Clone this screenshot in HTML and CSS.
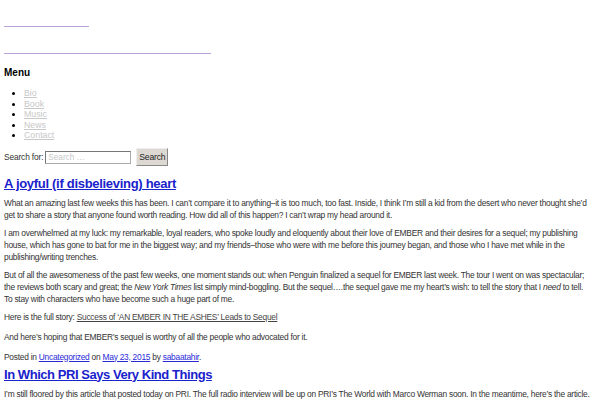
FILE: index.html
```html
<!DOCTYPE html>
<html>
<head>
<meta charset="utf-8">
<link rel="stylesheet" href="styles.css">
</head>
<body>
<header class="site-header">
  <h1 class="site-title"><a href="#" class="ghost ghost-title" aria-label="Home"></a></h1>
  <h2 class="site-desc"><a href="#" class="ghost ghost-desc" aria-label="Tagline"></a></h2>
</header>
<nav class="menu">
  <h3 class="menu-title">Menu</h3>
  <ul class="menu-list">
    <li><a href="#">Bio</a></li>
    <li><a href="#">Book</a></li>
    <li><a href="#">Music</a></li>
    <li><a href="#">News</a></li>
    <li><a href="#">Contact</a></li>
  </ul>
</nav>
<form class="search">
  <label class="search-label">Search for:</label>
  <input class="search-input" type="text" placeholder="Search …">
  <button class="search-btn" type="button">Search</button>
</form>
<article class="post">
  <h2 class="post-title"><a href="#">A joyful (if disbelieving) heart</a></h2>
  <p>What an amazing last few weeks this has been. I can’t compare it to anything–it is too much, too fast. Inside, I think I’m still a kid from the desert who never thought she’d get to share a story that anyone found worth reading. How did all of this happen? I can’t wrap my head around it.</p>
  <p>I am overwhelmed at my luck: my remarkable, loyal readers, who spoke loudly and eloquently about their love of EMBER and their desires for a sequel; my publishing house, which has gone to bat for me in the biggest way; and my friends–those who were with me before this journey began, and those who I have met while in the publishing/writing trenches.</p>
  <p>But of all the awesomeness of the past few weeks, one moment stands out: when Penguin finalized a sequel for EMBER last week. The tour I went on was spectacular; the reviews both scary and great; the <em>New York Times</em> list simply mind-boggling. But the sequel….the sequel gave me my heart’s wish: to tell the story that I <em>need</em> to tell. To stay with characters who have become such a huge part of me.</p>
  <p class="story">Here is the full story:  <a href="#" class="story-link">Success of ‘AN EMBER IN THE ASHES’ Leads to Sequel</a></p>
  <p>And here’s hoping that EMBER’s sequel is worthy of all the people who advocated for it.</p>
  <p class="meta">Posted in <a href="#">Uncategorized</a> on <a href="#">May 23, 2015</a> by <a href="#">sabaatahir</a>.</p>
</article>
<article class="post">
  <h2 class="post-title post-title-caps"><a href="#">In Which PRI Says Very Kind Things</a></h2>
  <p>I’m still floored by this article that posted today on PRI. The full radio interview will be up on PRI’s The World with Marco Werman soon. In the meantime, here’s the article.</p>
</article>
</body>
</html>
```
FILE: styles.css
```css
html, body {
  margin: 0;
  padding: 0;
  background: #fff;
}
body {
  padding: 0 8px 0 4px;
  font-family: "Liberation Sans", Arial, sans-serif;
  font-size: 8.4px;
  line-height: 12px;
  letter-spacing: -0.25px;
  color: #333;
}
.site-title, .site-desc {
  margin: 0;
  font-size: 14px;
  line-height: 14px;
  font-weight: normal;
}
.ghost {
  display: block;
  height: 26px;
  border-bottom: 1px solid #b9a3d9;
}
.ghost-title { width: 85px; }
.ghost-desc { width: 207px; }
.menu-title {
  margin: 12px 0 0;
  font-size: 10px;
  line-height: 14px;
  font-weight: bold;
  letter-spacing: 0;
  color: #000;
}
.menu-list {
  margin: 8px 0 7px;
  padding-left: 20px;
  line-height: 10.5px;
  font-size: 8.8px;
  letter-spacing: 0;
  color: #000;
}
.menu-list a {
  color: #c8c8c8;
}
.search {
  display: flex;
  align-items: center;
  gap: 2px;
  margin: 0;
  height: 19px;
  font-size: 8.4px;
  letter-spacing: -0.15px;
}
.search-input {
  width: 80px;
  height: 11px;
  padding: 0 2px;
  border: 1px solid #aaa;
  border-top-color: #777;
  border-left-color: #777;
  font-family: inherit;
  font-size: 8.2px;
  color: #333;
  margin: 0 3px 0 0;
}
.search-input::placeholder { color: #c8c8c8; }
.search-btn {
  height: 18px;
  padding: 0 2px;
  font-family: inherit;
  font-size: 8.6px;
  letter-spacing: -0.2px;
  color: #222;
  background: #ddd9d2;
  border: 1px solid #888;
  border-top-color: #eee;
  border-left-color: #eee;
}
.post-title {
  margin: 9px 0 0;
  font-size: 13px;
  line-height: 16px;
  letter-spacing: -0.3px;
  font-weight: bold;
}
.post-title-caps {
  letter-spacing: -0.45px;
}
.post-title a { color: #1a22cc; }
.post p {
  margin: 6px 0;
}
.post-title + p { margin-top: 5px; }
.post p.story { margin-bottom: 8px; }
.post p.meta { margin: 8px 0 0; }
.post + .post .post-title { margin-top: 4px; }
.story-link { color: #444; }
.meta a { color: #2b2bd6; }
```
